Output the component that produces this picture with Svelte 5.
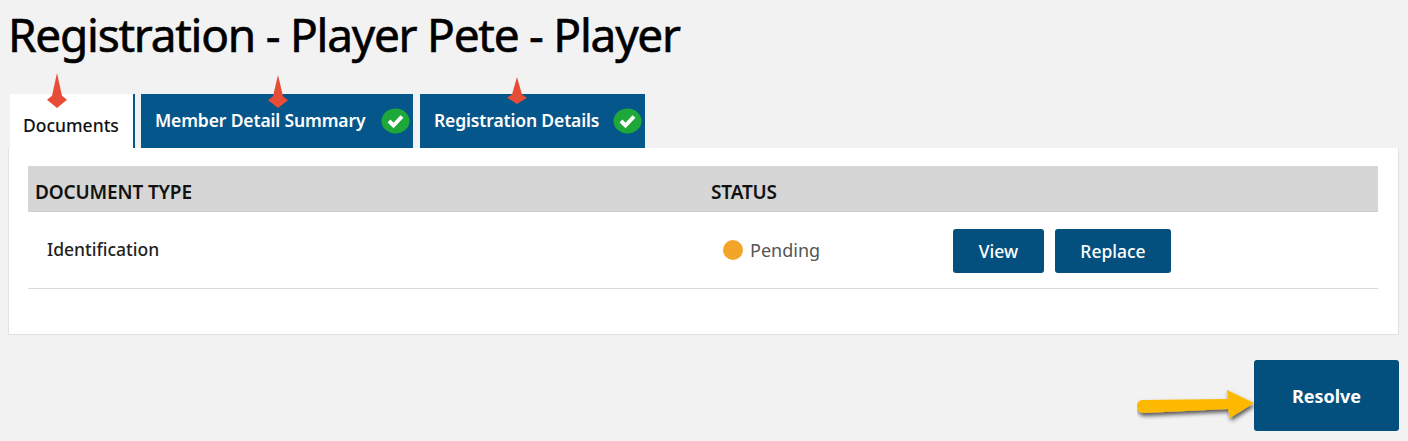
<script>
  const tabs = [
    { label: 'Member Detail Summary', width: 272 },
    { label: 'Registration Details', width: 225 }
  ];
  // red markers sit over the tabs, placed by hand like the annotations in the screenshot
  const markers = [
    { x: 57, top: 73, h: 35 },
    { x: 278, top: 75, h: 33 },
    { x: 517, top: 77, h: 27 }
  ];
</script>

<div class="page">
  <h1>Registration - Player Pete - Player</h1>

  <div class="tabs">
    <div class="tab active">Documents</div>
    {#each tabs as tab}
      <div class="tab done" style="width: {tab.width}px">
        <span>{tab.label}</span>
        <svg class="check" width="29" height="26" viewBox="0 0 29 26" aria-hidden="true">
          <ellipse cx="14.5" cy="13" rx="14" ry="12.5" fill="#1fa83a" />
          <path d="M8 13l4.5 4.5L21 8.5" fill="none" stroke="#fff" stroke-width="4" />
        </svg>
      </div>
    {/each}
  </div>

  <div class="panel">
    <div class="head">
      <div class="col-type">DOCUMENT TYPE</div>
      <div class="col-status">STATUS</div>
    </div>
    <div class="row">
      <div class="col-type name">Identification</div>
      <div class="col-status pending"><i class="dot"></i>Pending</div>
      <div class="actions">
        <button class="view">View</button>
        <button class="replace">Replace</button>
      </div>
    </div>
  </div>

  <div class="footer">
    <button class="resolve">Resolve</button>
  </div>

  {#each markers as m}
    <svg class="marker" style="left: {m.x - 10}px; top: {m.top}px" width="20" height={m.h} viewBox="0 0 20 34" preserveAspectRatio="none" aria-hidden="true">
      <path d="M10 0L15 22L20 26L10 34L0 26L5 22Z" fill="#e64c36" />
    </svg>
  {/each}

  <svg class="arrow" width="122" height="50" viewBox="0 0 122 50" aria-hidden="true">
    <defs>
      <filter id="sh" x="-10%" y="-30%" width="120%" height="170%">
        <feDropShadow dx="1" dy="3" stdDeviation="2" flood-color="#000" flood-opacity="0.65" />
      </filter>
    </defs>
    <path d="M5 11L91 10L90 1L117 14L93 29L91 20L7 24Q0 24 0 17Q0 12 5 11Z" fill="#fdb900" filter="url(#sh)" />
  </svg>
</div>

<style>
  :global(body) {
    background: #f2f2f2;
    font-family: "Noto Sans", sans-serif;
  }

  .page {
    position: relative;
    height: 441px;
    padding: 0 9px 0 8px;
    box-sizing: border-box;
    overflow: hidden;
  }

  h1 {
    margin: 0;
    padding: 5px 0 0 0;
    height: 94px;
    box-sizing: border-box;
    font-size: 46px;
    line-height: 58px;
    font-weight: 400;
    letter-spacing: -1.25px;
    color: #000;
    -webkit-text-stroke: 0.6px #000;
  }

  .tabs {
    display: flex;
    padding-left: 2px;
    height: 54px;
  }

  .tab {
    box-sizing: border-box;
    height: 54px;
    display: flex;
    align-items: center;
  }

  .tab.active {
    width: 125px;
    background: #fff;
    border-right: 2px solid #05568a;
    padding: 8px 0 0 13px;
    margin-right: 6px;
    color: #111;
    font-size: 17.5px;
    font-weight: 500;
  }

  .tab.done {
    background: #05568a;
    color: #fff;
    font-weight: 600;
    font-size: 17.5px;
    letter-spacing: -0.14px;
    padding: 0 3px 0 14px;
    margin-right: 7px;
    justify-content: space-between;
  }

  .tab.done span {
    margin-top: -2px;
  }

  .check {
    margin-top: -1px;
    flex: none;
  }

  .panel {
    background: #fff;
    border: 1px solid #e2e2e2;
    border-top: none;
    height: 187px;
    box-sizing: border-box;
    padding: 18px 20px 0 19px;
  }

  .head {
    display: flex;
    align-items: center;
    height: 46px;
    background: #d6d6d6;
    border-bottom: 1px solid #cfcfcf;
    box-sizing: border-box;
    padding: 7px 0 0 7px;
    font-size: 19px;
    font-weight: 600;
    letter-spacing: -0.15px;
    color: #111;
  }

  .head .col-type {
    width: 676px;
  }

  .row {
    display: flex;
    align-items: center;
    height: 77px;
    box-sizing: border-box;
    border-bottom: 1px solid #d9d9d9;
    padding-left: 19px;
  }

  .name {
    width: 676px;
    font-size: 17.5px;
    font-weight: 500;
    margin-top: -3px;
    color: #222;
  }

  .pending {
    display: flex;
    align-items: center;
    width: 230px;
    font-size: 18px;
    color: #555;
    margin-top: -1px;
  }

  .dot {
    width: 20px;
    height: 20px;
    border-radius: 50%;
    background: #f3a52a;
    margin-right: 7px;
  }

  .actions {
    display: flex;
    gap: 11px;
    margin-top: 1px;
  }

  button {
    font-family: inherit;
    background: #03507f;
    color: #fff;
    border: none;
    border-radius: 3px;
    padding: 0;
    font-size: 17.5px;
    font-weight: 500;
  }

  .view {
    width: 91px;
    height: 44px;
  }

  .replace {
    width: 116px;
    height: 44px;
  }

  .footer {
    display: flex;
    justify-content: flex-end;
    padding-top: 25px;
  }

  .resolve {
    width: 145px;
    height: 71px;
    font-size: 18px;
    font-weight: 700;
  }

  .marker {
    position: absolute;
  }

  .arrow {
    position: absolute;
    left: 1137px;
    top: 389px;
  }
</style>
